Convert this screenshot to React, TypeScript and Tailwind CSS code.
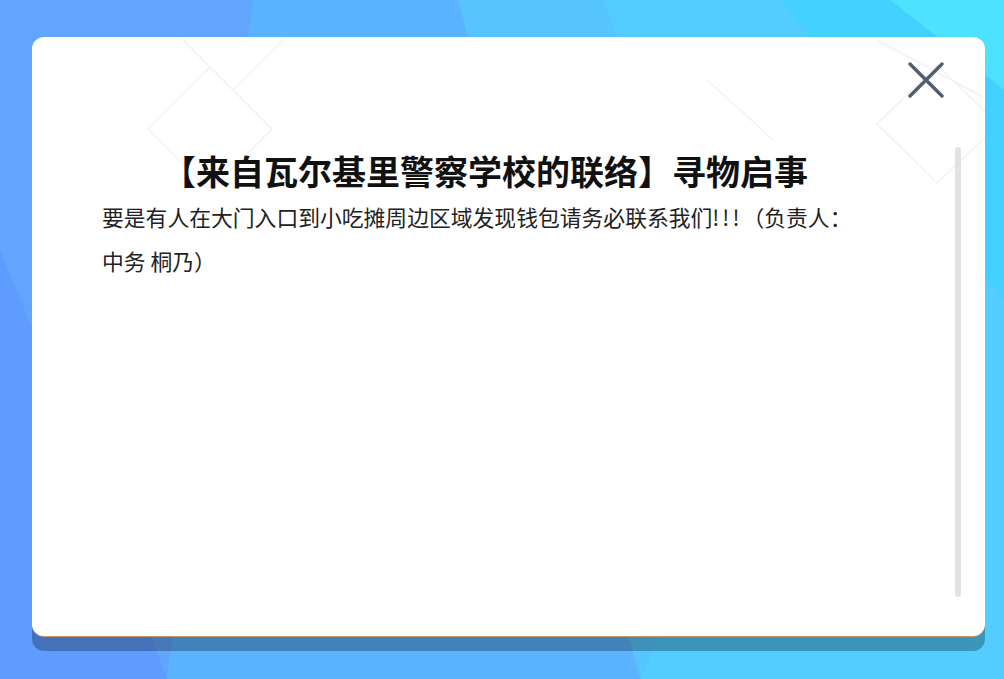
import React from 'react';

const cjk = '"Noto Sans CJK SC", "Noto Sans", sans-serif';

// faceted blue backdrop behind the dialog
function Backdrop() {
  return (
    <svg className="absolute inset-0 h-full w-full" viewBox="0 0 1004 679" preserveAspectRatio="none">
      <rect width="1004" height="679" fill="#5aacff" />
      <polygon points="0,0 253,0 200,679 0,679" fill="#61a5ff" />
      <polygon points="0,250 70,420 167,679 0,679" fill="#5e9dff" />
      <polygon points="253,0 458,0 640,679 167,679" fill="#5ab3ff" />
      <polygon points="458,0 602,0 760,400 640,679" fill="#55c4ff" />
      <polygon points="602,0 782,0 1004,300 1004,679 640,679 760,400" fill="#53cdff" />
      <polygon points="782,0 890,0 1004,90 1004,300" fill="#43d1ff" />
      <polygon points="890,0 1004,0 1004,90" fill="#4de2ff" />
    </svg>
  );
}

// faint diamond line pattern on the card
function CardPattern() {
  return (
    <svg className="pointer-events-none absolute inset-0 h-full w-full" viewBox="0 0 953 599">
      <g fill="none" stroke="#f2f2f2" strokeWidth="1.5">
        <polygon points="178,30 240,92 178,154 116,92" />
        <line x1="151" y1="3" x2="178" y2="30" />
        <line x1="251" y1="3" x2="201" y2="53" />
        <polygon points="905,28 967,88 905,146 845,87" />
        <line x1="675" y1="43" x2="741" y2="103" />
        <line x1="845" y1="3" x2="951" y2="60" />
      </g>
    </svg>
  );
}

export default function App() {
  return (
    <div className="relative h-[679px] w-[1004px] overflow-hidden">
      <Backdrop />
      <div className="relative pl-[32px] pt-[37px]">
        <div className="relative h-[599px] w-[953px] overflow-hidden rounded-[12px] bg-white shadow-[0_1px_0_#c79866,0_15px_0_rgba(0,0,0,0.27)]">
          <CardPattern />

          <button className="absolute right-[41px] top-[25px] h-[36px] w-[36px]" aria-label="close">
            <svg viewBox="0 0 36 36" className="h-full w-full">
              <path d="M2 2 L34 34 M34 2 L2 34" stroke="#525c72" strokeWidth="3.4" strokeLinecap="round" />
            </svg>
          </button>

          <div className="relative flex pl-[70px] pt-[110px]">
            <div className="w-[766px]" style={{ fontFamily: cjk }}>
              <h1 className="text-center text-[34px] font-bold leading-[48px] text-[#111]">
                【来自瓦尔基里警察学校的联络】寻物启事
              </h1>
              <p className="text-[21.8px] leading-[44px] text-[#222]">
                要是有人在大门入口到小吃摊周边区域发现钱包请务必联系我们
                <span className="tracking-[3px]">!!!</span>（负责人：中务 桐乃）
              </p>
            </div>
            <div className="ml-[87px] h-[450px] w-[6px] rounded-full bg-[#e2e2e2]" />
          </div>
        </div>
      </div>
    </div>
  );
}
